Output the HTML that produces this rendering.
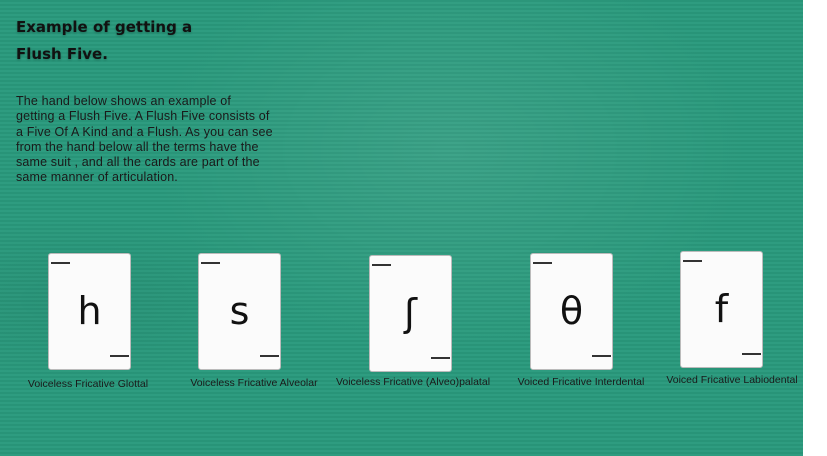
<!DOCTYPE html>
<html><head><style>
body{margin:0;width:827px;height:456px;background:#fff;overflow:hidden;font-family:"Liberation Sans",sans-serif}
#g{position:absolute;left:0;top:0;width:803px;height:456px;background:#2a9a7d;
background-image:repeating-linear-gradient(180deg,rgba(0,0,0,0.04) 0 2px,rgba(255,255,255,0.02) 2px 4px),radial-gradient(ellipse at 450px 150px,rgba(255,255,255,0.08),rgba(0,0,0,0) 300px),radial-gradient(ellipse at 80px 300px,rgba(0,0,0,0.05),rgba(0,0,0,0) 200px)}
h1{position:absolute;left:16px;top:14px;margin:0;font:bold 15px/27px "DejaVu Sans",sans-serif;color:#111;text-shadow:0 1px 2px rgba(0,0,0,.25)}
p{position:absolute;left:16px;top:94px;margin:0;white-space:nowrap;font-size:12.5px;line-height:15.3px;letter-spacing:0.15px;color:#1a1a1a}
.c{position:absolute;width:83px;height:117px;background:#fbfbfb;border:1px solid #bbb;border-radius:3px;box-sizing:border-box}
.c:before{content:"";position:absolute;left:2px;top:8px;width:19px;height:2px;background:#333}
.c:after{content:"";position:absolute;left:61px;top:101px;width:19px;height:2px;background:#333}
.c span{position:absolute;left:0;right:0;top:35px;text-align:center;font:38px "DejaVu Sans",sans-serif;color:#111}
.l{position:absolute;font-size:10.5px;color:#1a1a1a;white-space:nowrap;transform:translateX(-50%)}
</style></head><body><div id="g">
<h1>Example of getting a<br>Flush Five.</h1>
<p>The hand below shows an example of<br>getting a Flush Five. A Flush Five consists of<br>a Five Of A Kind and a Flush. As you can see<br>from the hand below all the terms have the<br>same suit , and all the cards are part of the<br>same manner of articulation.</p>
<div class="c" style="left:48px;top:253px"><span>h</span></div>
<div class="c" style="left:198px;top:253px"><span>s</span></div>
<div class="c" style="left:369px;top:255px"><span>ʃ</span></div>
<div class="c" style="left:530px;top:253px"><span>θ</span></div>
<div class="c" style="left:680px;top:251px"><span>f</span></div>
<div class="l" style="left:88px;top:378px">Voiceless Fricative Glottal</div>
<div class="l" style="left:254px;top:377px">Voiceless Fricative Alveolar</div>
<div class="l" style="left:413px;top:376px">Voiceless Fricative (Alveo)palatal</div>
<div class="l" style="left:581px;top:376px">Voiced Fricative Interdental</div>
<div class="l" style="left:732px;top:374px">Voiced Fricative Labiodental</div>
</div></body></html>
